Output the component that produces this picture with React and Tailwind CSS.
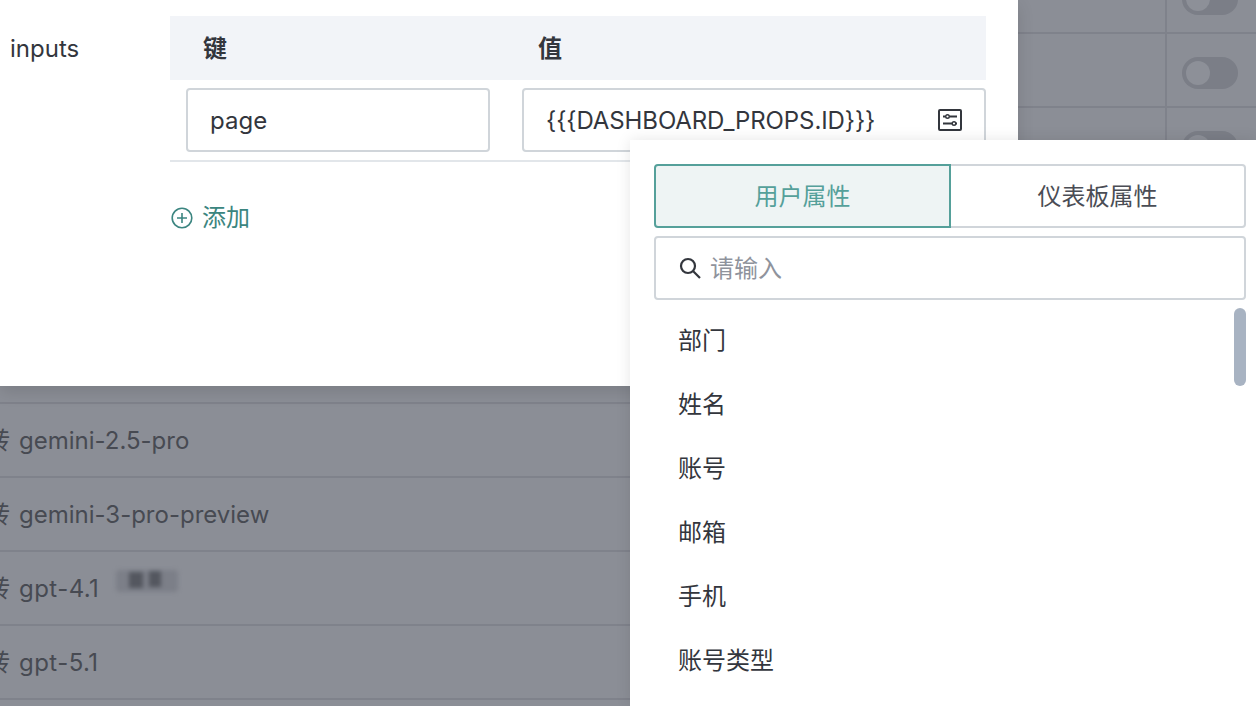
import React from "react";

const rows = [
  { name: "" },
  { name: "" },
  { name: "" },
  { name: "" },
  { name: "" },
  { name: "" },
  { name: "gemini-2.5-pro" },
  { name: "gemini-3-pro-preview" },
  { name: "gpt-4.1", blurred: true, nameClass: "tracking-[0.45px]" },
  { name: "gpt-5.1", nameClass: "tracking-[0.45px]" },
  { name: "" },
];

const attrs = ["部门", "姓名", "账号", "邮箱", "手机", "账号类型"];

const Toggle = () => (
  <div className="w-14 h-8 mt-[6px] rounded-full bg-[#7b7e87] p-1">
    <div className="w-6 h-6 rounded-full bg-[#8d9098]" />
  </div>
);

const SlidersIcon = () => (
  <svg width="24" height="24" viewBox="0 0 24 24" fill="none" stroke="#33363d" strokeWidth="2">
    <rect x="1" y="2" width="22" height="20" rx="1" />
    <path d="M5 8.5h2.5M11.5 8.5H19M5 15.5h9M18 15.5h1" strokeWidth="1.8" />
    <circle cx="9.5" cy="8.5" r="1.8" strokeWidth="1.4" />
    <circle cx="16" cy="15.5" r="1.8" strokeWidth="1.4" />
  </svg>
);

const SearchIcon = () => (
  <svg width="24" height="24" viewBox="0 0 24 24" fill="none" stroke="#33363d" strokeWidth="2.2">
    <circle cx="10" cy="10" r="7" />
    <path d="M15.2 15.2 22 22" />
  </svg>
);

const PlusIcon = () => (
  <svg width="22" height="22" viewBox="0 0 22 22" fill="none" stroke="#3b8580" strokeWidth="1.6">
    <circle cx="11" cy="11" r="9.8" />
    <path d="M6 11h10M11 6v10" />
  </svg>
);

export default function App() {
  return (
    <div className="relative w-[1256px] h-[706px] overflow-hidden bg-[#8b8e96] font-['Inter','Noto_Sans_CJK_SC',sans-serif] text-[24px]">
      {/* dimmed table behind the dialog */}
      <div className="-mt-[40px] flex flex-col">
        {rows.map((row, i) => (
          <div key={i} className="flex h-[74px] shrink-0 border-b-2 border-[#7f828b]">
            <div className="w-[1165px] shrink-0 flex items-center gap-[17px] pt-[2px] text-[#474a52]">
              {row.name && (
                <span className="-ml-[14px] flex items-center gap-[9px]">
                  <span>转</span>
                  <span className={row.nameClass}>{row.name}</span>
                </span>
              )}
              {row.blurred && (
                <div className="relative w-[62px] h-[22px] -mt-[16px] rounded bg-[#7c7f88] blur-[2px]">
                  <div className="absolute left-[13px] top-[2px] w-[14px] h-[16px] bg-[#54575f]" />
                  <div className="absolute left-[33px] top-[1px] w-[12px] h-[16px] bg-[#54575f]" />
                </div>
              )}
            </div>
            <div className="flex-1 flex items-center border-l-2 border-[#7f828b] pl-[15px]">
              <Toggle />
            </div>
          </div>
        ))}
      </div>

      {/* dialog */}
      <div className="absolute left-0 top-0 w-[1018px] h-[386px] bg-white shadow-[0_6px_16px_rgba(0,0,0,0.12)] flex text-[#33363d]">
        <div className="w-[170px] shrink-0 pl-[10px] pt-[32px] leading-[34px]">inputs</div>
        <div className="w-[816px] pt-4">
          <div className="flex h-16 items-center pt-[2px] bg-[#f2f4f8] font-bold">
            <div className="w-[368px] pl-[33px]">键</div>
            <div>值</div>
          </div>
          <div className="flex gap-8 pl-4 pt-2 pb-2 border-b-2 border-[#e2e6ea]">
            <div className="w-[304px] h-16 flex items-center pt-[2px] px-[22px] border-2 border-[#d0d5da] rounded">page</div>
            <div className="w-[464px] h-16 flex items-center justify-between px-[22px] border-2 border-[#d0d5da] rounded">
              <span className="pt-[2px] tracking-[-0.1px]">{"{{{DASHBOARD_PROPS.ID}}}"}</span>
              <SlidersIcon />
            </div>
          </div>
          <div className="flex items-center gap-[9px] pt-[38px] pl-[1px] text-[#3b8580]">
            <PlusIcon />
            <span>添加</span>
          </div>
        </div>
      </div>

      {/* attribute picker */}
      <div className="absolute left-[630px] top-[140px] w-[626px] h-[566px] bg-white shadow-[0_0_14px_rgba(0,0,0,0.1)] pl-6 pr-[10px] pt-6">
        <div className="flex h-16">
          <div className="w-[297px] flex items-center justify-center pt-[2px] bg-[#eef4f4] border-2 border-[#55a09a] rounded-l text-[#55a09a]">用户属性</div>
          <div className="flex-1 flex items-center justify-center pt-[2px] border-2 border-l-0 border-[#d0d5da] rounded-r text-[#4a4d55]">仪表板属性</div>
        </div>
        <div className="mt-2 h-16 flex items-center gap-2 pl-[22px] border-2 border-[#d0d5da] rounded text-[#8f939c]">
          <SearchIcon />
          <span className="pt-[1px]">请输入</span>
        </div>
        <div className="relative pt-2">
          {attrs.map((a) => (
            <div key={a} className="h-16 flex items-center pt-[2px] pl-6 text-[#33363d]">{a}</div>
          ))}
          <div className="absolute right-0 top-2 w-3 h-[78px] rounded-full bg-[#a8b3c2]" />
        </div>
      </div>
    </div>
  );
}
